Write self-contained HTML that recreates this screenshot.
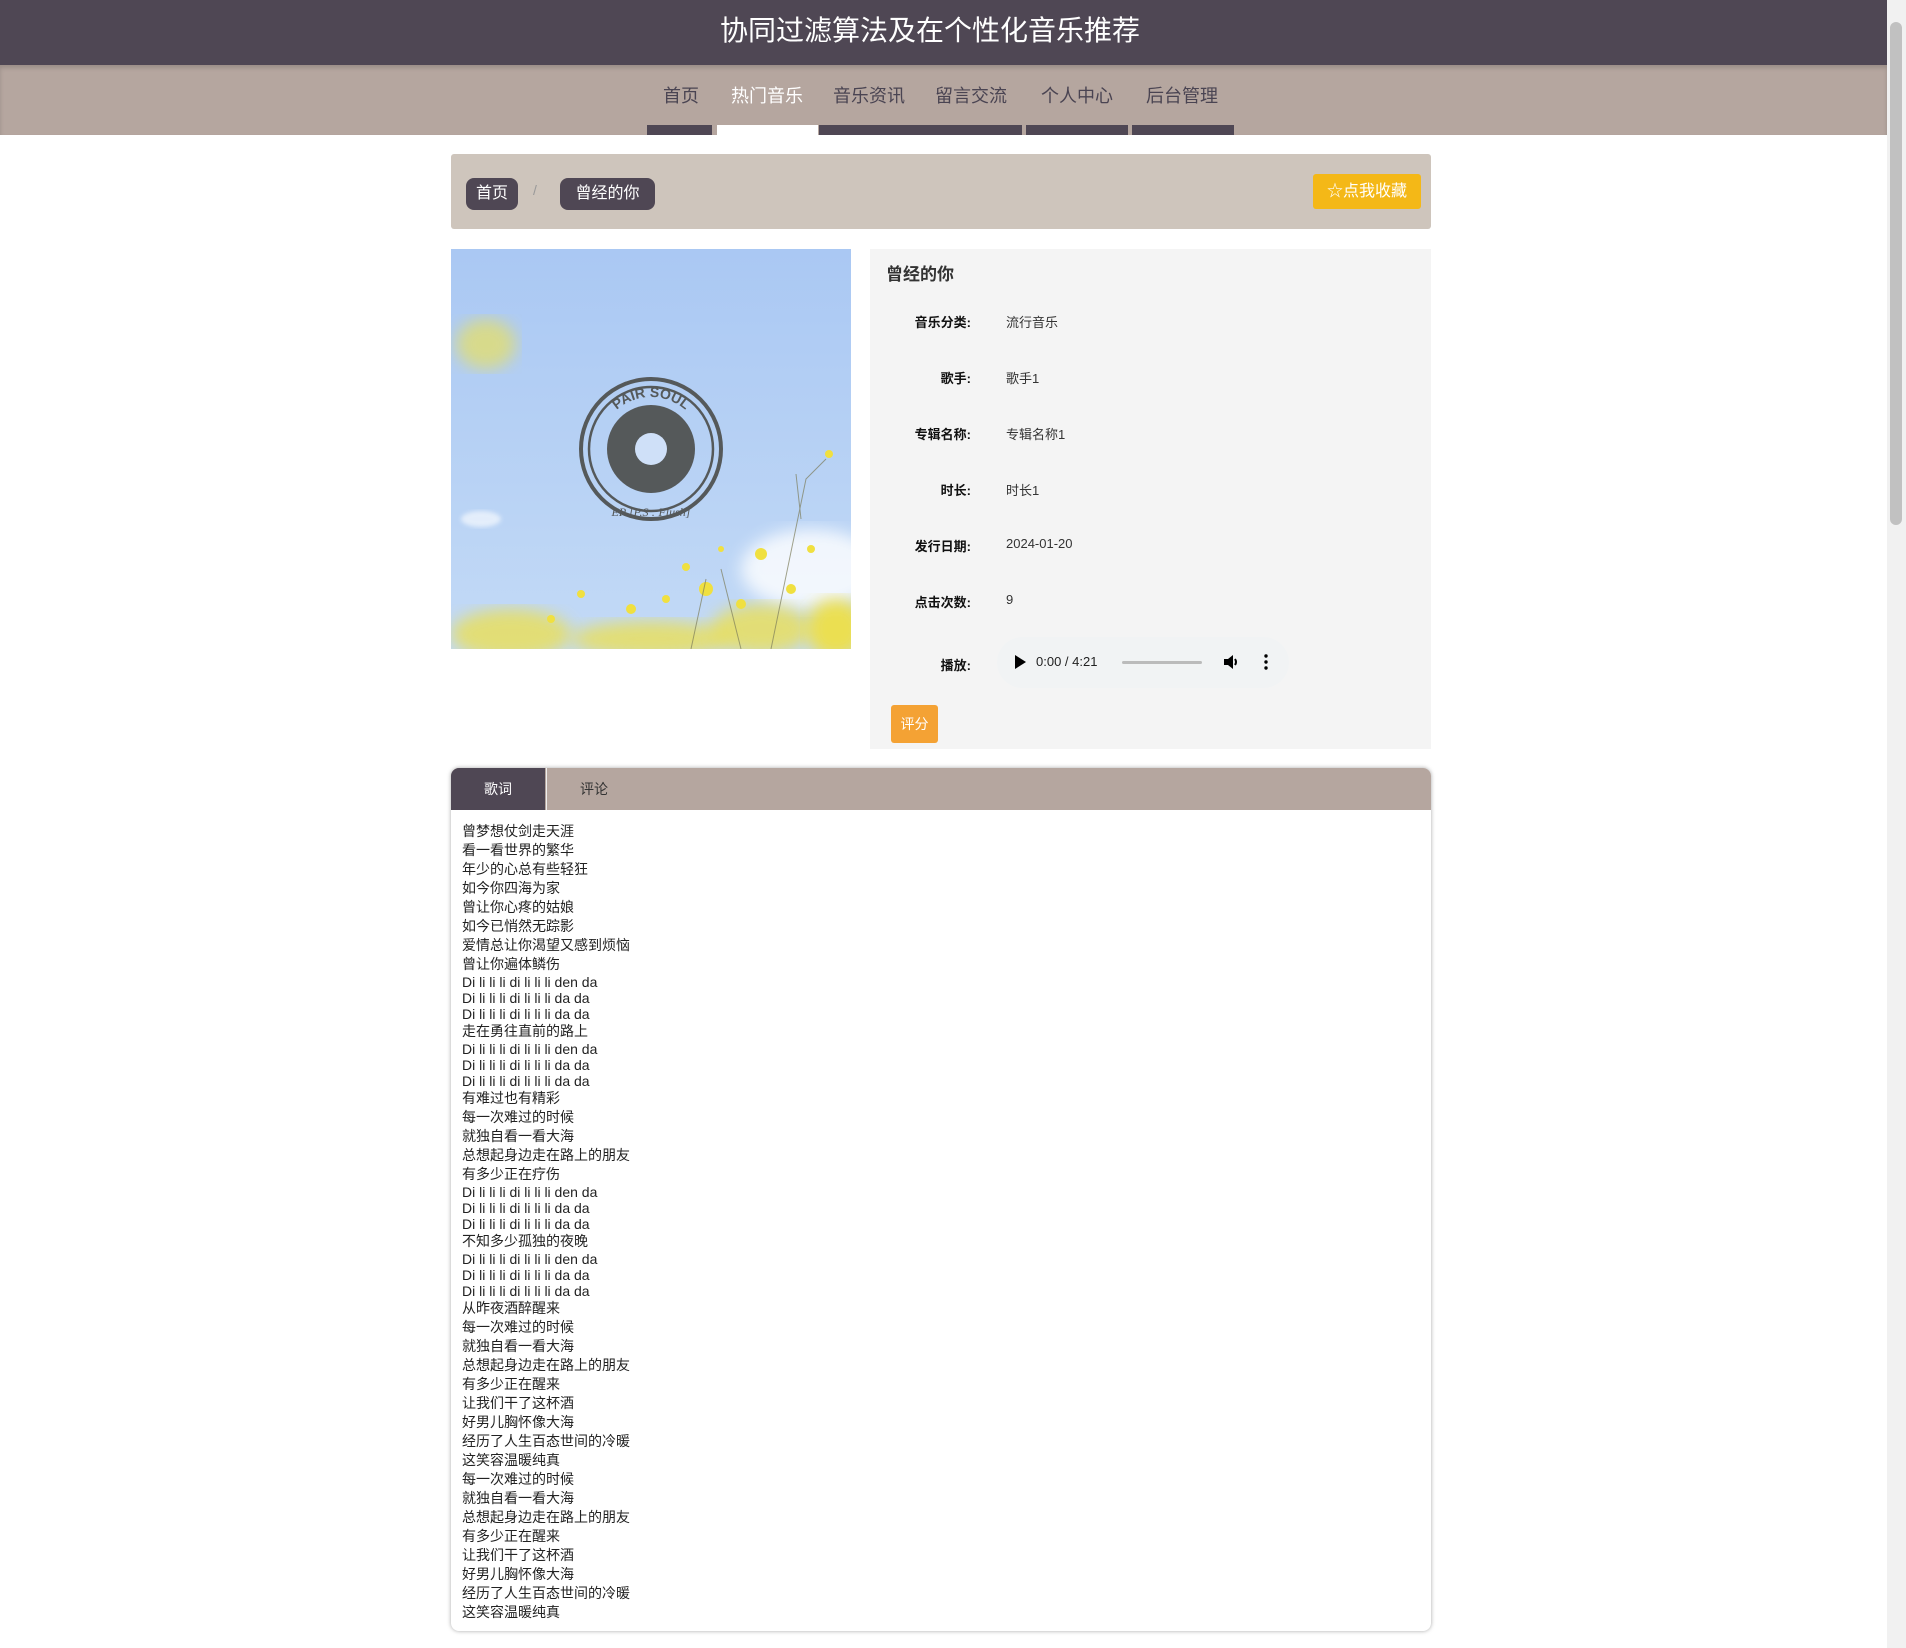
<!DOCTYPE html>
<html><head><meta charset="utf-8"><style>
*{margin:0;padding:0;box-sizing:border-box}
body{width:1906px;height:1648px;overflow:hidden;background:#fff;font-family:"Liberation Sans","Noto Sans CJK SC",sans-serif;color:#333;position:relative}
.abs{position:absolute}
#hdr{left:0;top:0;width:1887px;height:65px;background:#4f4754}
#hdr span{position:absolute;left:930px;top:0;transform:translateX(-50%);color:#fff;font-size:28px;line-height:62px;white-space:nowrap}
#nav{left:0;top:65px;width:1887px;height:70px;background:#b5a69f;box-shadow:inset 0 3px 4px rgba(0,0,0,.15)}
.ni{position:absolute;top:17px;font-size:18px;color:#4a4452;transform:translateX(-50%);white-space:nowrap}
.bar{position:absolute;top:60px;height:10px;background:#4f4754}
#sb{left:1887px;top:0;width:19px;height:1648px;background:#f1f1f1}
#sbt{left:1890px;top:22px;width:12px;height:503px;background:#c1c1c1;border-radius:6px}
#bc{left:451px;top:154px;width:980px;height:75px;background:#cec5bc;border-radius:3px}
.pill{position:absolute;top:24px;height:32px;background:#4f4754;color:#fff;border-radius:8px;font-size:16px;line-height:32px;text-align:center}
#fav{left:862px;top:20px;width:108px;height:35px;background:#f4b817;color:#fff;border-radius:3px;font-size:16px;line-height:35px;text-align:center}
#img{left:451px;top:249px;width:400px;height:400px;overflow:hidden}
#info{left:870px;top:249px;width:561px;height:500px;background:#f4f4f4}
.lb{position:absolute;right:460px;font-size:13px;color:#111;white-space:nowrap;font-weight:bold;-webkit-text-stroke:0}
.vl{position:absolute;left:136px;font-size:13px;color:#333;white-space:nowrap}
#tabs{left:451px;top:768px;width:980px;height:863px;border-radius:8px;box-shadow:0 0 4px rgba(0,0,0,.35);overflow:hidden;background:#fff}
#th{left:0;top:0;width:980px;height:42px;background:#b5a69f}
#lyr{left:11px;top:54px;font-size:14px;color:#222}
#lyr div{height:16px;line-height:16px;white-space:nowrap}
#lyr div.c{height:19px;line-height:19px}
</style></head><body>
<div id="hdr" class="abs"><span>协同过滤算法及在个性化音乐推荐</span></div>
<div id="nav" class="abs">
<span class="ni" style="left:681px">首页</span>
<span class="ni" style="left:767px;color:#fff">热门音乐</span>
<span class="ni" style="left:869px">音乐资讯</span>
<span class="ni" style="left:971px">留言交流</span>
<span class="ni" style="left:1077px">个人中心</span>
<span class="ni" style="left:1182px">后台管理</span>
<div class="bar" style="left:647px;width:65px"></div>
<div class="bar" style="left:717px;width:101px;background:#fff"></div>
<div class="bar" style="left:819px;width:203px"></div>
<div class="bar" style="left:1026px;width:102px"></div>
<div class="bar" style="left:1132px;width:102px"></div>
</div>
<div id="sb" class="abs"></div><div id="sbt" class="abs"></div>

<div id="bc" class="abs">
<div class="pill" style="left:15px;width:52px">首页</div>
<span class="abs" style="left:82px;top:28px;color:#999;font-size:14px">/</span>
<div class="pill" style="left:109px;width:95px">曾经的你</div>
<div id="fav" class="abs">☆点我收藏</div>
</div>

<div id="img" class="abs">
<svg width="400" height="400" viewBox="0 0 400 400">
<defs>
<linearGradient id="sky" x1="0" y1="0" x2="0" y2="1"><stop offset="0" stop-color="#aac8f3"/><stop offset="1" stop-color="#c3daf6"/></linearGradient>
<filter id="bl"><feGaussianBlur stdDeviation="8"/></filter>
<filter id="bl2"><feGaussianBlur stdDeviation="2"/></filter>
<path id="arc" d="M-52 0 A52 52 0 0 1 52 0"/>
</defs>
<rect width="400" height="400" fill="url(#sky)"/>
<ellipse cx="360" cy="320" rx="70" ry="40" fill="#fff" opacity=".8" filter="url(#bl)"/>
<ellipse cx="30" cy="270" rx="20" ry="8" fill="#fff" opacity=".6" filter="url(#bl2)"/>
<ellipse cx="35" cy="95" rx="30" ry="25" fill="#e8e060" opacity=".7" filter="url(#bl)"/>
<g fill="#f0e040">
<ellipse cx="60" cy="385" rx="60" ry="25" opacity=".7" filter="url(#bl)"/>
<ellipse cx="200" cy="390" rx="80" ry="18" opacity=".7" filter="url(#bl)"/>
<ellipse cx="310" cy="380" rx="50" ry="25" opacity=".7" filter="url(#bl)"/>
<ellipse cx="385" cy="380" rx="30" ry="30" opacity=".9" filter="url(#bl)"/>
<circle cx="310" cy="305" r="6"/><circle cx="255" cy="340" r="7"/><circle cx="235" cy="318" r="4"/><circle cx="378" cy="205" r="4"/>
<circle cx="180" cy="360" r="5"/><circle cx="130" cy="345" r="4"/><circle cx="290" cy="355" r="5"/><circle cx="340" cy="340" r="5"/>
<circle cx="100" cy="370" r="4"/><circle cx="215" cy="350" r="4"/><circle cx="360" cy="300" r="4"/><circle cx="270" cy="300" r="3"/>
</g>
<g stroke="#7d7d5a" stroke-width="1" fill="none" opacity=".7">
<path d="M320 400 L355 230 L375 210"/><path d="M290 400 L270 320"/><path d="M350 270 L345 225"/><path d="M240 400 L255 330"/>
</g>
<g transform="translate(165,120)" fill="none" stroke="#55595a">
<circle cx="35" cy="80" r="70" stroke-width="4"/><circle cx="35" cy="80" r="62" stroke-width="2.5"/>
</g>
<circle cx="200" cy="200" r="44" fill="#55595a"/><circle cx="200" cy="200" r="16" fill="#cfe0f8"/>
<g transform="translate(200,200)"><text font-family="Liberation Sans" font-weight="bold" font-size="14" fill="#55595a" text-anchor="middle"><textPath href="#arc" startOffset="50%">PAIR SOUL</textPath></text></g>
<text x="200" y="267" text-anchor="middle" font-family="Liberation Serif" font-style="italic" font-size="12" fill="#55595a">EP [P.S : Flush]</text>
</svg>
</div>

<div id="info" class="abs">
<div class="abs" style="left:16px;top:11px;font-size:17px;font-weight:bold;color:#333">曾经的你</div>
<span class="lb" style="top:63px">音乐分类:</span><span class="vl" style="top:63px">流行音乐</span>
<span class="lb" style="top:119px">歌手:</span><span class="vl" style="top:119px">歌手1</span>
<span class="lb" style="top:175px">专辑名称:</span><span class="vl" style="top:175px">专辑名称1</span>
<span class="lb" style="top:231px">时长:</span><span class="vl" style="top:231px">时长1</span>
<span class="lb" style="top:287px">发行日期:</span><span class="vl" style="top:287px">2024-01-20</span>
<span class="lb" style="top:343px">点击次数:</span><span class="vl" style="top:343px">9</span>
<span class="lb" style="top:406px">播放:</span>
<div class="abs" style="left:127px;top:388px;width:292px;height:51px;background:#f1f3f4;border-radius:26px">
<svg class="abs" style="left:17px;top:18px" width="12" height="14"><path d="M1 0 L12 7 L1 14Z" fill="#000"/></svg>
<span class="abs" style="left:39px;top:17px;font-size:13px;color:#222">0:00 / 4:21</span>
<div class="abs" style="left:125px;top:24px;width:80px;height:3px;background:#bbb;border-radius:2px"></div>
<svg class="abs" style="left:225px;top:16px" width="18" height="18" viewBox="0 0 18 18"><path d="M2 6 H6 L11 2 V16 L6 12 H2Z" fill="#000"/><path d="M13 6 Q15 9 13 12" stroke="#000" stroke-width="2" fill="none"/></svg>
<svg class="abs" style="left:267px;top:17px" width="4" height="16"><circle cx="2" cy="2" r="1.7"/><circle cx="2" cy="8" r="1.7"/><circle cx="2" cy="14" r="1.7"/></svg>
</div>
<div class="abs" style="left:21px;top:456px;width:47px;height:38px;background:#f4a234;border-radius:3px;color:#fff;font-size:14px;line-height:38px;text-align:center">评分</div>
</div>

<div id="tabs" class="abs">
<div id="th" class="abs">
<div class="abs" style="left:0;top:0;width:94px;height:42px;background:#4f4754;color:#fff;font-size:14px;line-height:42px;text-align:center">歌词</div>
<div class="abs" style="left:95px;top:0;width:95px;height:42px;color:#333;font-size:14px;line-height:42px;text-align:center;border-left:1px solid #eee">评论</div>
</div>
<div id="lyr" class="abs">
<div class="c">曾梦想仗剑走天涯</div><div class="c">看一看世界的繁华</div><div class="c">年少的心总有些轻狂</div><div class="c">如今你四海为家</div><div class="c">曾让你心疼的姑娘</div><div class="c">如今已悄然无踪影</div><div class="c">爱情总让你渴望又感到烦恼</div><div class="c">曾让你遍体鳞伤</div>
<div>Di li li li di li li li den da</div><div>Di li li li di li li li da da</div><div>Di li li li di li li li da da</div>
<div class="c">走在勇往直前的路上</div>
<div>Di li li li di li li li den da</div><div>Di li li li di li li li da da</div><div>Di li li li di li li li da da</div>
<div class="c">有难过也有精彩</div><div class="c">每一次难过的时候</div><div class="c">就独自看一看大海</div><div class="c">总想起身边走在路上的朋友</div><div class="c">有多少正在疗伤</div>
<div>Di li li li di li li li den da</div><div>Di li li li di li li li da da</div><div>Di li li li di li li li da da</div>
<div class="c">不知多少孤独的夜晚</div>
<div>Di li li li di li li li den da</div><div>Di li li li di li li li da da</div><div>Di li li li di li li li da da</div>
<div class="c">从昨夜酒醉醒来</div><div class="c">每一次难过的时候</div><div class="c">就独自看一看大海</div><div class="c">总想起身边走在路上的朋友</div><div class="c">有多少正在醒来</div><div class="c">让我们干了这杯酒</div><div class="c">好男儿胸怀像大海</div><div class="c">经历了人生百态世间的冷暖</div><div class="c">这笑容温暖纯真</div><div class="c">每一次难过的时候</div><div class="c">就独自看一看大海</div><div class="c">总想起身边走在路上的朋友</div><div class="c">有多少正在醒来</div><div class="c">让我们干了这杯酒</div><div class="c">好男儿胸怀像大海</div><div class="c">经历了人生百态世间的冷暖</div><div class="c">这笑容温暖纯真</div>
</div>
</div>
</body></html>
